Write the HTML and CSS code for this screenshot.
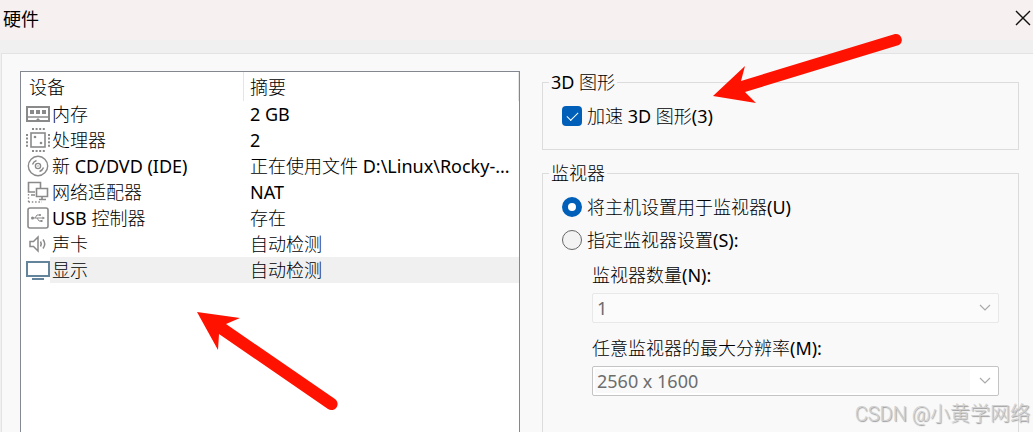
FILE: index.html
```html
<!DOCTYPE html>
<html lang="zh-CN">
<head>
  <meta charset="UTF-8" />
  <meta name="viewport" content="width=device-width, initial-scale=1.0" />
  <title>硬件</title>
  <link rel="stylesheet" href="styles.css">
</head>
<body>
  <header class="titlebar">
    <h1>硬件</h1>
    <button type="button" class="close" aria-label="关闭">
      <svg width="16" height="16" viewBox="0 0 16 16"><path d="M1 1L15 15M15 1L1 15" fill="none" stroke="#111" stroke-width="1.4"/></svg>
    </button>
  </header>

  <main class="panel">
    <div class="device-list">
      <table>
        <colgroup>
          <col class="col-icon">
          <col class="col-name">
          <col>
        </colgroup>
        <thead>
          <tr><th colspan="2">设备</th><th>摘要</th></tr>
        </thead>
        <tbody>
          <tr>
            <td class="icon">
              <svg width="24" height="24" viewBox="0 0 24 24" fill="none" stroke="#8a8a8a">
                <path d="M1 5H23V19H1Z" stroke-width="2"/>
                <path d="M1 15H23" stroke-width="1.500"/>
                <path d="M5 9H7V11H5ZM11 9H13V11H11ZM17 9H19V11H17Z" stroke-width="2"/>
                <path d="M10 19L12 17L14 19" stroke-width="1.500"/>
              </svg>
            </td>
            <td>内存</td><td>2 GB</td>
          </tr>
          <tr>
            <td class="icon">
              <svg width="24" height="24" viewBox="0 0 24 24" fill="none" stroke="#8a8a8a">
                <rect x="5" y="5" width="14" height="14" stroke-width="1.600"/>
                <path d="M6 1H19M6 23H19" stroke-width="2" stroke-dasharray="2 1.600"/>
                <path d="M1 6V19M23 6V19" stroke-width="2" stroke-dasharray="2 1.600"/>
                <circle cx="9" cy="9" r="1.300" fill="#8a8a8a" stroke="none"/>
                <circle cx="15" cy="15" r="1.300" fill="#8a8a8a" stroke="none"/>
              </svg>
            </td>
            <td>处理器</td><td>2</td>
          </tr>
          <tr>
            <td class="icon">
              <svg width="24" height="24" viewBox="0 0 24 24" fill="none" stroke="#8a8a8a" stroke-width="1.400">
                <circle cx="12" cy="12" r="9.700"/>
                <circle cx="12" cy="12" r="2.600"/>
                <circle cx="12" cy="12" r="0.700" fill="#8a8a8a" stroke="none"/>
                <path d="M6.500 10.500Q7.500 7.500 10.500 6.500M17.500 13.500Q16.500 16.500 13.500 17.500"/>
              </svg>
            </td>
            <td>新 CD/DVD (IDE)</td><td>正在使用文件 D:\Linux\Rocky-...</td>
          </tr>
          <tr>
            <td class="icon">
              <svg width="24" height="24" viewBox="0 0 24 24" fill="none" stroke="#8a8a8a" stroke-width="1.600">
                <path d="M9 12H2.500V2.500H14.500V8"/>
                <path d="M10.500 8.500H21.500V16.500H10.500Z"/>
                <path d="M13 19.500H20M16 17V19M5 15H9"/>
                <path d="M2.500 14V22M2.500 22H16" stroke-dasharray="1.500 1.800" stroke-width="1.300"/>
              </svg>
            </td>
            <td>网络适配器</td><td>NAT</td>
          </tr>
          <tr>
            <td class="icon">
              <svg width="24" height="24" viewBox="0 0 24 24" fill="none" stroke="#8a8a8a">
                <rect x="2" y="2" width="20" height="20" rx="2" stroke-width="1.600"/>
                <path d="M6 12H17M9 12L11 9H14M11 12L13 15H16" stroke-width="1"/>
                <circle cx="6.500" cy="12" r="1.500" fill="#8a8a8a" stroke="none"/>
                <circle cx="14" cy="9" r="1.100" fill="#8a8a8a" stroke="none"/>
                <path d="M14.500 14H16.500V16H14.500ZM16.500 10.500L19 12L16.500 13.500Z" fill="#8a8a8a" stroke="none"/>
              </svg>
            </td>
            <td>USB 控制器</td><td>存在</td>
          </tr>
          <tr>
            <td class="icon">
              <svg width="24" height="24" viewBox="0 0 24 24" fill="none" stroke="#8a8a8a" stroke-width="1.500">
                <path d="M4 9.500H7.500L12 5V19L7.500 14.500H4Z"/>
                <path d="M14.500 9.500Q16 12 14.500 14.500M17 7.500Q20.500 12 17 16.500"/>
              </svg>
            </td>
            <td>声卡</td><td>自动检测</td>
          </tr>
          <tr class="selected">
            <td class="icon">
              <svg width="24" height="24" viewBox="0 0 24 24" fill="none" stroke="#64849c">
                <rect x="1" y="4" width="22" height="14" stroke-width="2" fill="#fff"/>
                <path d="M6 21H18" stroke-width="2"/>
              </svg>
            </td>
            <td>显示</td><td>自动检测</td>
          </tr>
        </tbody>
      </table>
    </div>

    <form class="settings">
      <fieldset class="group-3d">
        <legend>3D 图形</legend>
        <label class="option"><input type="checkbox" checked>加速 3D 图形(3)</label>
      </fieldset>

      <fieldset class="group-monitor">
        <legend>监视器</legend>
        <label class="option"><input type="radio" name="monitor" checked>将主机设置用于监视器(U)</label>
        <label class="option"><input type="radio" name="monitor">指定监视器设置(S):</label>
        <div class="field">
          <label for="count">监视器数量(N):</label>
          <div class="select">
            <select id="count" disabled><option>1</option></select>
            <svg width="12" height="8" viewBox="0 0 12 8"><path d="M1 1L6 6L11 1" fill="none" stroke="#aaa" stroke-width="1.200"/></svg>
          </div>
        </div>
        <div class="field">
          <label for="resolution">任意监视器的最大分辨率(M):</label>
          <div class="select editable">
            <select id="resolution" disabled><option>2560 x 1600</option></select>
            <svg width="12" height="8" viewBox="0 0 12 8"><path d="M1 1L6 6L11 1" fill="none" stroke="#aaa" stroke-width="1.200"/></svg>
          </div>
        </div>
      </fieldset>
    </form>
  </main>

  <!-- annotation arrows -->
  <svg class="arrow arrow-3d" width="192" height="72" viewBox="0 0 192 72">
    <path d="M0 64L32 34L28 49L182 2A6 6 0 0 1 186 13L32 60L43 71Z" fill="#ff1200"/>
  </svg>
  <svg class="arrow arrow-display" width="144" height="100" viewBox="0 0 144 100">
    <path d="M0 0L43 6L29 12L138 87A6 6 0 0 1 131 97L22 22L21 38Z" fill="#ff1200"/>
  </svg>

  <div class="watermark">CSDN @小黄学网络</div>
</body>
</html>
```
FILE: styles.css
```css
* {
  box-sizing: border-box;
}

body {
  display: flex;
  flex-direction: column;
  height: 100vh;
  margin: 0;
  overflow: hidden;
  position: relative;
  background-color: #f0f0f0;
  color: #000;
  font-family: "Noto Sans", "Noto Sans CJK SC Light", "Noto Sans CJK SC", sans-serif;
  font-size: 18px;
  line-height: 26px;
}

.titlebar {
  display: flex;
  align-items: center;
  justify-content: space-between;
  height: 40px;
  padding: 0 2px 5px 3px;
  background-color: #f7f0f1;
}

.titlebar h1 {
  margin: 0;
  font-family: "Noto Sans CJK SC", sans-serif;
  font-size: 18px;
  font-weight: 400;
}

.close {
  display: flex;
  padding: 0;
  background: none;
  border: none;
  cursor: pointer;
}

.panel {
  flex: 1;
  display: grid;
  grid-template-columns: 500fr 477fr;
  gap: 22px;
  margin: 13px 0 0 1px;
  padding: 17px 14px 0 18px;
  background-color: #f9f9f9;
  border: solid #e3e3e3;
  border-width: 1px 0 0 1px;
}

.device-list {
  background-color: #fff;
  border: 1px solid #828790;
  border-bottom: none;
}

table {
  width: 100%;
  table-layout: fixed;
  border-collapse: collapse;
}

.col-icon {
  width: 29px;
}

.col-name {
  width: 194px;
}

th {
  height: 29px;
  padding: 0 6px 0 8px;
  font-weight: 400;
  text-align: left;
  background: linear-gradient(#e5e5e5, #e5e5e5) right / 1px 100% no-repeat;
}

th + th {
  padding-left: 6px;
}

td {
  height: 26px;
  padding: 0 2px;
  overflow: hidden;
  white-space: nowrap;
}

td:last-child {
  padding: 0 6px;
}

.icon {
  padding: 0 0 0 5px;
}

.icon svg {
  display: block;
}

.selected td:not(.icon) {
  background-color: #f0f0f0;
}

.settings {
  display: flex;
  flex-direction: column;
  gap: 11px;
  margin-top: -1px;
}

fieldset {
  min-width: 0;
  margin: 0;
  border: 1px solid #dcdcdc;
}

legend {
  padding: 0 2px;
  line-height: 24px;
}

.group-3d {
  height: 80px;
  padding: 9px 19px 0 6px;
}

.group-monitor {
  flex: 1;
  padding: 5px 19px 0 6px;
  border-bottom: none;
}

.option {
  display: flex;
  align-items: center;
  gap: 5px;
  height: 33px;
  padding-left: 13px;
}

.group-3d .option {
  height: 26px;
}

.option input {
  appearance: none;
  width: 20px;
  height: 20px;
  margin: 0;
  background-color: #f3f3f3;
  border: 1px solid #666;
}

.option input[type="checkbox"] {
  display: grid;
  place-items: center;
  background-color: #005fb8;
  border: none;
  border-radius: 4px;
}

.option input[type="checkbox"]::after {
  content: "";
  width: 10px;
  height: 5px;
  margin-bottom: 3px;
  border: solid #fff;
  border-width: 0 0 1px 1px;
  transform: rotate(-45deg);
}

.option input[type="radio"] {
  border-radius: 50%;
}

.option input[type="radio"]:checked {
  background-color: #fff;
  border: 6px solid #005fb8;
}

.field {
  padding-left: 43px;
}

.field label {
  display: block;
  height: 37px;
  padding-top: 6px;
}

.field + .field label {
  height: 43px;
  padding-top: 12px;
}

.select {
  position: relative;
}

.select select {
  appearance: none;
  display: block;
  width: 100%;
  height: 30px;
  padding: 0 4px;
  background-color: #fbfbfb;
  border: 1px solid #e8e8e8;
  border-radius: 2px;
  color: #6d6d6d;
  font: inherit;
  opacity: 1;
}

.select.editable select {
  background: linear-gradient(#f9f9f9, #f9f9f9) 2px 2px / calc(100% - 30px) calc(100% - 4px) no-repeat #fff;
  border-color: #c4c4c4;
}

.select svg {
  position: absolute;
  right: 8px;
  top: 11px;
}

.arrow {
  position: absolute;
}

.arrow-3d {
  left: 713px;
  top: 32px;
}

.arrow-display {
  left: 197px;
  top: 312px;
}

.watermark {
  position: absolute;
  right: 3px;
  bottom: 5px;
  color: #d0d0d0;
  font-family: Roboto, "Noto Sans CJK SC", sans-serif;
  font-size: 20px;
  font-weight: 300;
  text-shadow: 1px 1px 1px #999;
}
```
